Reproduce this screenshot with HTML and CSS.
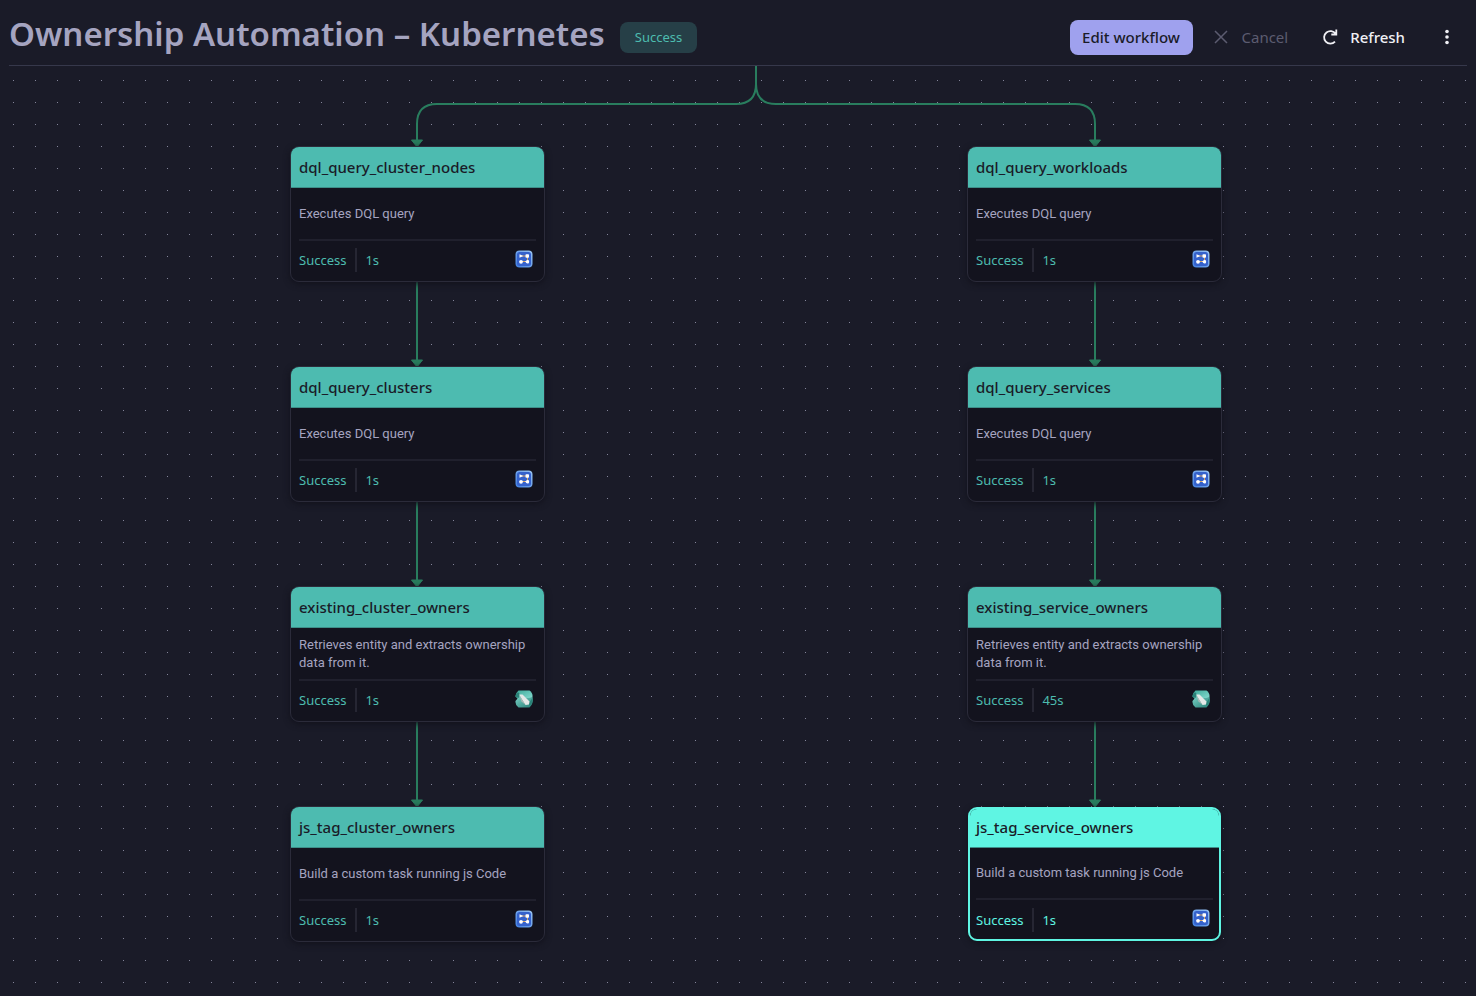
FILE: index.html
```html
<!DOCTYPE html>
<html lang="en">
<head>
<meta charset="utf-8">
<meta name="viewport" content="width=device-width, initial-scale=1">
<title>Ownership Automation – Kubernetes</title>
<link rel="stylesheet" href="styles.css">
</head>
<body>
<svg class="defs" aria-hidden="true">
  <defs>
    <linearGradient id="blue" x1="0" y1="1" x2="1" y2="0"><stop offset="0" stop-color="#3f7ee0"/><stop offset="1" stop-color="#9cc6f3"/></linearGradient>
    <linearGradient id="tealTop" x1="0" y1="0" x2="1" y2="1"><stop offset="0" stop-color="#3da899"/><stop offset="1" stop-color="#8be0d4"/></linearGradient>
    <linearGradient id="tealBottom" x1="0" y1="0" x2="1" y2="1"><stop offset="0" stop-color="#79d1c5"/><stop offset="1" stop-color="#277f76"/></linearGradient>
  </defs>
  <symbol id="flow" viewBox="0 0 18 18">
    <rect x=".5" y=".5" width="17" height="17" rx="4" fill="url(#blue)"/>
    <rect x="2" y="2" width="14" height="14" rx="2.500" fill="#3562cc"/>
    <path d="M5.500 6h7v5.500H6" fill="none" stroke="#d9a566" stroke-width="1"/>
    <path d="M4.500 4.200 8.300 6 4.500 7.800zM13.500 10 9.800 11.800 13.500 13.600z" fill="#fff"/>
    <rect x="10.500" y="4.200" width="3.500" height="3.500" rx=".8" fill="#fff"/>
    <circle cx="6" cy="11.800" r="1.900" fill="#fff"/>
    <circle cx="12.500" cy="11.800" r="1.700" fill="#fff"/>
  </symbol>
  <symbol id="owner" viewBox="0 0 18 18">
    <path d="M3.500.5h11Q18 3 17.500 7L15 10H4L.5 6.500Q.5 3 3.500.5z" fill="url(#tealTop)"/>
    <path d="M.5 11 3 8h11l3.500-1Q19 13 14.500 17.500h-11Q0 15 .5 11z" fill="url(#tealBottom)"/>
    <path d="M.5 5 3 2l2 2.500L3.500 8 .5 7zM17.500 8Q18 13 15 16l-1.500-2.500z" fill="#2a8278"/>
    <path d="M4 4.500h3.500l7 7L14 14.500l-3.500.5z" fill="#e4e8e7"/>
    <path d="M4 4.500 10.500 15 6.500 11.500z" fill="#a9b8b5"/>
  </symbol>
</svg>

<header class="topbar">
  <h1 class="title">Ownership Automation – Kubernetes</h1>
  <span class="badge">Success</span>
  <div class="actions">
    <button class="btn btn-primary" type="button">Edit workflow</button>
    <button class="btn btn-cancel" type="button" disabled>
      <svg width="14" height="14" viewBox="0 0 14 14" fill="none" stroke="currentColor" stroke-width="1.500" aria-hidden="true"><path d="M1 1l12 12M13 1 1 13"/></svg>Cancel
    </button>
    <button class="btn btn-refresh" type="button">
      <svg width="16" height="16" viewBox="0 0 16 16" fill="none" stroke="currentColor" stroke-width="1.800" aria-hidden="true"><path d="M13 12.700A6.300 6.300 0 1 1 13.600 4.800M14.300.5v5H9.300"/></svg>Refresh
    </button>
    <button class="btn btn-more" type="button" aria-label="More actions">
      <svg width="4" height="16" viewBox="0 0 4 16" fill="currentColor" aria-hidden="true"><circle cx="2" cy="2.500" r="1.800"/><circle cx="2" cy="8" r="1.800"/><circle cx="2" cy="13.500" r="1.800"/></svg>
    </button>
  </div>
</header>

<main class="canvas">
  <svg class="edges" width="1476" height="930" aria-hidden="true">
    <g fill="none" stroke="#297d5e" stroke-width="2">
      <path d="M756 0V18Q756 38 736 38H437Q417 38 417 58V76"/>
      <path d="M756 0V18Q756 38 776 38H1075Q1095 38 1095 58V76"/>
      <path d="M417 215V296M417 435V516M417 655V736M1095 215V296M1095 435V516M1095 655V736"/>
    </g>
    <g fill="#297d5e" stroke="#297d5e" stroke-linejoin="round">
      <path d="M411.500 74h11L417 81zM411.500 294h11L417 301zM411.500 514h11L417 521zM411.500 734h11L417 741z"/>
      <path d="M1089.500 74h11L1095 81zM1089.500 294h11L1095 301zM1089.500 514h11L1095 521zM1089.500 734h11L1095 741z"/>
    </g>
  </svg>

  <article class="node left row1">
    <h2 class="node-title">dql_query_cluster_nodes</h2>
    <p class="node-text">Executes DQL query</p>
    <div class="node-foot"><span class="state">Success</span><span class="time">1s</span><svg class="node-icon" aria-hidden="true"><use href="#flow"/></svg></div>
  </article>
  <article class="node left row2">
    <h2 class="node-title">dql_query_clusters</h2>
    <p class="node-text">Executes DQL query</p>
    <div class="node-foot"><span class="state">Success</span><span class="time">1s</span><svg class="node-icon" aria-hidden="true"><use href="#flow"/></svg></div>
  </article>
  <article class="node left row3">
    <h2 class="node-title">existing_cluster_owners</h2>
    <p class="node-text">Retrieves entity and extracts ownership data from it.</p>
    <div class="node-foot"><span class="state">Success</span><span class="time">1s</span><svg class="node-icon" aria-hidden="true"><use href="#owner"/></svg></div>
  </article>
  <article class="node left row4">
    <h2 class="node-title">js_tag_cluster_owners</h2>
    <p class="node-text">Build a custom task running js Code</p>
    <div class="node-foot"><span class="state">Success</span><span class="time">1s</span><svg class="node-icon" aria-hidden="true"><use href="#flow"/></svg></div>
  </article>

  <article class="node right row1">
    <h2 class="node-title">dql_query_workloads</h2>
    <p class="node-text">Executes DQL query</p>
    <div class="node-foot"><span class="state">Success</span><span class="time">1s</span><svg class="node-icon" aria-hidden="true"><use href="#flow"/></svg></div>
  </article>
  <article class="node right row2">
    <h2 class="node-title">dql_query_services</h2>
    <p class="node-text">Executes DQL query</p>
    <div class="node-foot"><span class="state">Success</span><span class="time">1s</span><svg class="node-icon" aria-hidden="true"><use href="#flow"/></svg></div>
  </article>
  <article class="node right row3">
    <h2 class="node-title">existing_service_owners</h2>
    <p class="node-text">Retrieves entity and extracts ownership data from it.</p>
    <div class="node-foot"><span class="state">Success</span><span class="time">45s</span><svg class="node-icon" aria-hidden="true"><use href="#owner"/></svg></div>
  </article>
  <article class="node right row4 selected">
    <h2 class="node-title">js_tag_service_owners</h2>
    <p class="node-text">Build a custom task running js Code</p>
    <div class="node-foot"><span class="state">Success</span><span class="time">1s</span><svg class="node-icon" aria-hidden="true"><use href="#flow"/></svg></div>
  </article>
</main>
</body>
</html>
```
FILE: styles.css
```css
* { box-sizing: border-box; }

body {
  margin: 0;
  min-height: 100vh;
  display: flex;
  flex-direction: column;
  background: #1a1b28;
  color: #a5a4c0;
  font-family: "Noto Sans", "Open Sans", sans-serif;
}

.defs { position: absolute; width: 0; height: 0; }

.topbar {
  display: flex;
  align-items: center;
  margin: 0 9px;
  padding-top: 9px;
  height: 66px;
  border-bottom: 1px solid #36384b;
}

.title {
  margin: 0 15px 6px 0;
  font-size: 33px;
  line-height: 48px;
  font-weight: 600;
  white-space: nowrap;
}

.badge {
  padding: 0 15px;
  border-radius: 8px;
  background: #263f47;
  color: #4dbcaf;
  font-size: 13px;
  line-height: 31px;
}

.actions { display: flex; align-items: center; margin-left: auto; }

.btn {
  display: flex;
  align-items: center;
  justify-content: center;
  gap: 12px;
  height: 35px;
  padding: 0;
  border: 0;
  border-radius: 8px;
  background: none;
  color: #f0f0f5;
  font: 500 15px "Noto Sans", "Open Sans", sans-serif;
}

.btn-primary { width: 123px; background: #9fa1ee; color: #1a1b28; }
.btn-cancel { gap: 14px; margin-left: 21px; color: #5c5c70; font-weight: 400; }
.btn-refresh { margin-left: 34px; }
.btn-more { width: 40px; margin-left: 22px; }

.canvas {
  position: relative;
  flex: 1;
  min-height: 930px;
  overflow: hidden;
  background: conic-gradient(at 1px 1px, transparent 75%, #84859a 0) 13px 14px / 22px 22px;
}

.edges { position: absolute; top: 0; left: 0; }

.node {
  position: absolute;
  display: flex;
  flex-direction: column;
  width: 255px;
  height: 136px;
  border: 1px solid #2b2b3a;
  border-radius: 9px;
  background: #13131e;
  box-shadow: 0 2px 6px #12121c;
  overflow: hidden;
}

.left { left: 290px; }
.right { left: 967px; }
.row1 { top: 80px; }
.row2 { top: 300px; }
.row3 { top: 520px; }
.row4 { top: 740px; }

.node-title {
  margin: 0;
  padding: 0 8px;
  border-bottom: 1px solid #3d8f89;
  background: #4dbbb0;
  color: #1a1b28;
  font-size: 15px;
  line-height: 40px;
  font-weight: 500;
}

.node-text {
  flex: 1;
  display: flex;
  align-items: center;
  margin: 0 8px;
  font-family: Roboto, "Noto Sans", sans-serif;
  font-size: 13px;
  line-height: 18px;
}

.node-foot {
  display: flex;
  align-items: center;
  height: 42px;
  margin: 0 8px;
  padding-bottom: 2px;
  border-top: 2px solid #20202d;
  color: #4dbcaf;
  font-size: 13px;
}

.state {
  padding-right: 9px;
  border-right: 2px solid #262633;
  line-height: 24px;
}

.time { padding-left: 8px; }
.node-icon { width: 18px; height: 18px; margin: 0 3px 3px auto; }

.selected {
  left: 968px;
  width: 253px;
  height: 134px;
  top: 741px;
  border: 2px solid #5ff5e3;
}
.selected .node-title { padding: 0 6px 2px; background: #5ff5e3; line-height: 36px; }
.selected .node-text { margin: 0 6px; }
.selected .node-foot { margin: 0 6px; height: 41px; padding-bottom: 0; color: #5ff5e3; }
```
